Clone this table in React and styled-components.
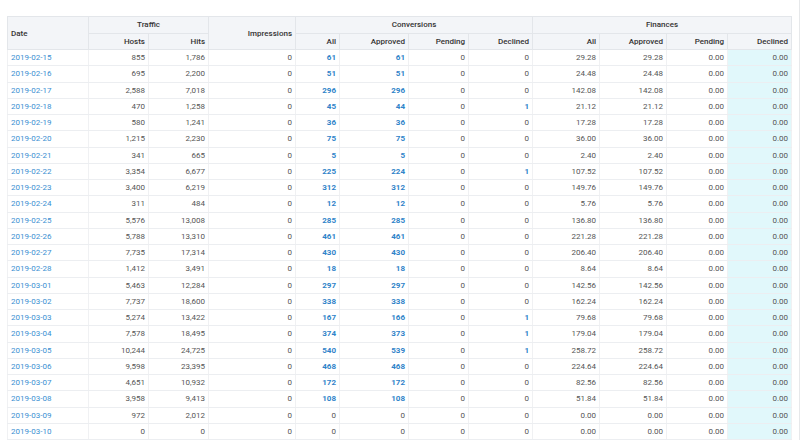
import React from "react";
import styled, { createGlobalStyle, css } from "styled-components";

const Global = createGlobalStyle`
  html, body { margin: 0; padding: 0; background: #fff; }
  body { font-family: Roboto, "Liberation Sans", Arial, sans-serif; }
`;

const Page = styled.div`
  width: 800px;
  height: 440px;
  box-sizing: border-box;
  border-right: 1px solid #e6e8ea;
  padding: 16px 0 0 7px;
  overflow: hidden;
`;

const Table = styled.table`
  width: 784px;
  table-layout: fixed;
  border-collapse: collapse;
  font-size: 8px;
  color: #555;
`;

const Th = styled.th`
  background: #f3f5f8;
  color: #333;
  font-weight: 500;
  height: 15.5px;
  padding: 0 3px;
  border: 1px solid #e3e6ea;
  text-align: ${(p) => p.$align || "right"};
  vertical-align: middle;
  white-space: nowrap;
  line-height: 9px;
`;

const Tr = styled.tr``;

const Td = styled.td`
  height: 15.25px;
  padding: 0 3px;
  border-top: 1px solid #eceef1;
  border-bottom: 1px solid #eceef1;
  border-left: 1px solid #f0f1f3;
  border-right: 1px solid #f0f1f3;
  text-align: ${(p) => p.$align || "right"};
  white-space: nowrap;
  line-height: 9px;
  background: ${(p) => (p.$tint ? "#e1f8fb" : "transparent")};
  ${(p) =>
    p.$strong &&
    css`
      color: #2f83c9;
      font-weight: 700;
    `}
`;

const DateLink = styled.a`
  color: #3b8fd2;
  text-decoration: none;
`;

const TotalRow = styled.tr`
  td {
    background: #e4f6f8;
  }
`;

const widths = [81, 60, 60, 87, 44, 69, 60, 64, 67, 67, 61, 64];

const raw = [
  ["2019-02-15", "855", "1,786", 61, 61, 0, 29.28],
  ["2019-02-16", "695", "2,200", 51, 51, 0, 24.48],
  ["2019-02-17", "2,588", "7,018", 296, 296, 0, 142.08],
  ["2019-02-18", "470", "1,258", 45, 44, 1, 21.12],
  ["2019-02-19", "580", "1,241", 36, 36, 0, 17.28],
  ["2019-02-20", "1,215", "2,230", 75, 75, 0, 36.0],
  ["2019-02-21", "341", "665", 5, 5, 0, 2.4],
  ["2019-02-22", "3,354", "6,677", 225, 224, 1, 107.52],
  ["2019-02-23", "3,400", "6,219", 312, 312, 0, 149.76],
  ["2019-02-24", "311", "484", 12, 12, 0, 5.76],
  ["2019-02-25", "5,576", "13,008", 285, 285, 0, 136.8],
  ["2019-02-26", "5,788", "13,310", 461, 461, 0, 221.28],
  ["2019-02-27", "7,735", "17,314", 430, 430, 0, 206.4],
  ["2019-02-28", "1,412", "3,491", 18, 18, 0, 8.64],
  ["2019-03-01", "5,463", "12,284", 297, 297, 0, 142.56],
  ["2019-03-02", "7,737", "18,600", 338, 338, 0, 162.24],
  ["2019-03-03", "5,274", "13,422", 167, 166, 1, 79.68],
  ["2019-03-04", "7,578", "18,495", 374, 373, 1, 179.04],
  ["2019-03-05", "10,244", "24,725", 540, 539, 1, 258.72],
  ["2019-03-06", "9,598", "23,395", 468, 468, 0, 224.64],
  ["2019-03-07", "4,651", "10,932", 172, 172, 0, 82.56],
  ["2019-03-08", "3,958", "9,413", 108, 108, 0, 51.84],
  ["2019-03-09", "972", "2,012", 0, 0, 0, 0],
  ["2019-03-10", "0", "0", 0, 0, 0, 0],
];

export default function App() {
  return (
    <>
      <Global />
      <Page>
        <Table>
          <colgroup>
            {widths.map((w, i) => (
              <col key={i} style={{ width: w }} />
            ))}
          </colgroup>
          <thead>
            <tr>
              <Th rowSpan={2} $align="left">Date</Th>
              <Th colSpan={2} $align="center">Traffic</Th>
              <Th rowSpan={2}>Impressions</Th>
              <Th colSpan={4} $align="center">Conversions</Th>
              <Th colSpan={4} $align="center">Finances</Th>
            </tr>
            <tr>
              <Th>Hosts</Th>
              <Th>Hits</Th>
              <Th>All</Th>
              <Th>Approved</Th>
              <Th>Pending</Th>
              <Th>Declined</Th>
              <Th>All</Th>
              <Th>Approved</Th>
              <Th>Pending</Th>
              <Th>Declined</Th>
            </tr>
          </thead>
          <tbody>
            {raw.map(([d, hosts, hits, all, appr, decl, fin]) => (
              <Tr key={d}>
                <Td $align="left">
                  <DateLink href="#">{d}</DateLink>
                </Td>
                <Td>{hosts}</Td>
                <Td>{hits}</Td>
                <Td>0</Td>
                <Td $strong={all > 0}>{all}</Td>
                <Td $strong={appr > 0}>{appr}</Td>
                <Td>0</Td>
                <Td $strong={decl > 0}>{decl}</Td>
                <Td>{fin.toFixed(2)}</Td>
                <Td>{fin.toFixed(2)}</Td>
                <Td>0.00</Td>
                <Td $tint>0.00</Td>
              </Tr>
            ))}
            <TotalRow>
              {widths.map((_, i) => (
                <Td key={i} />
              ))}
            </TotalRow>
          </tbody>
        </Table>
      </Page>
    </>
  );
}
